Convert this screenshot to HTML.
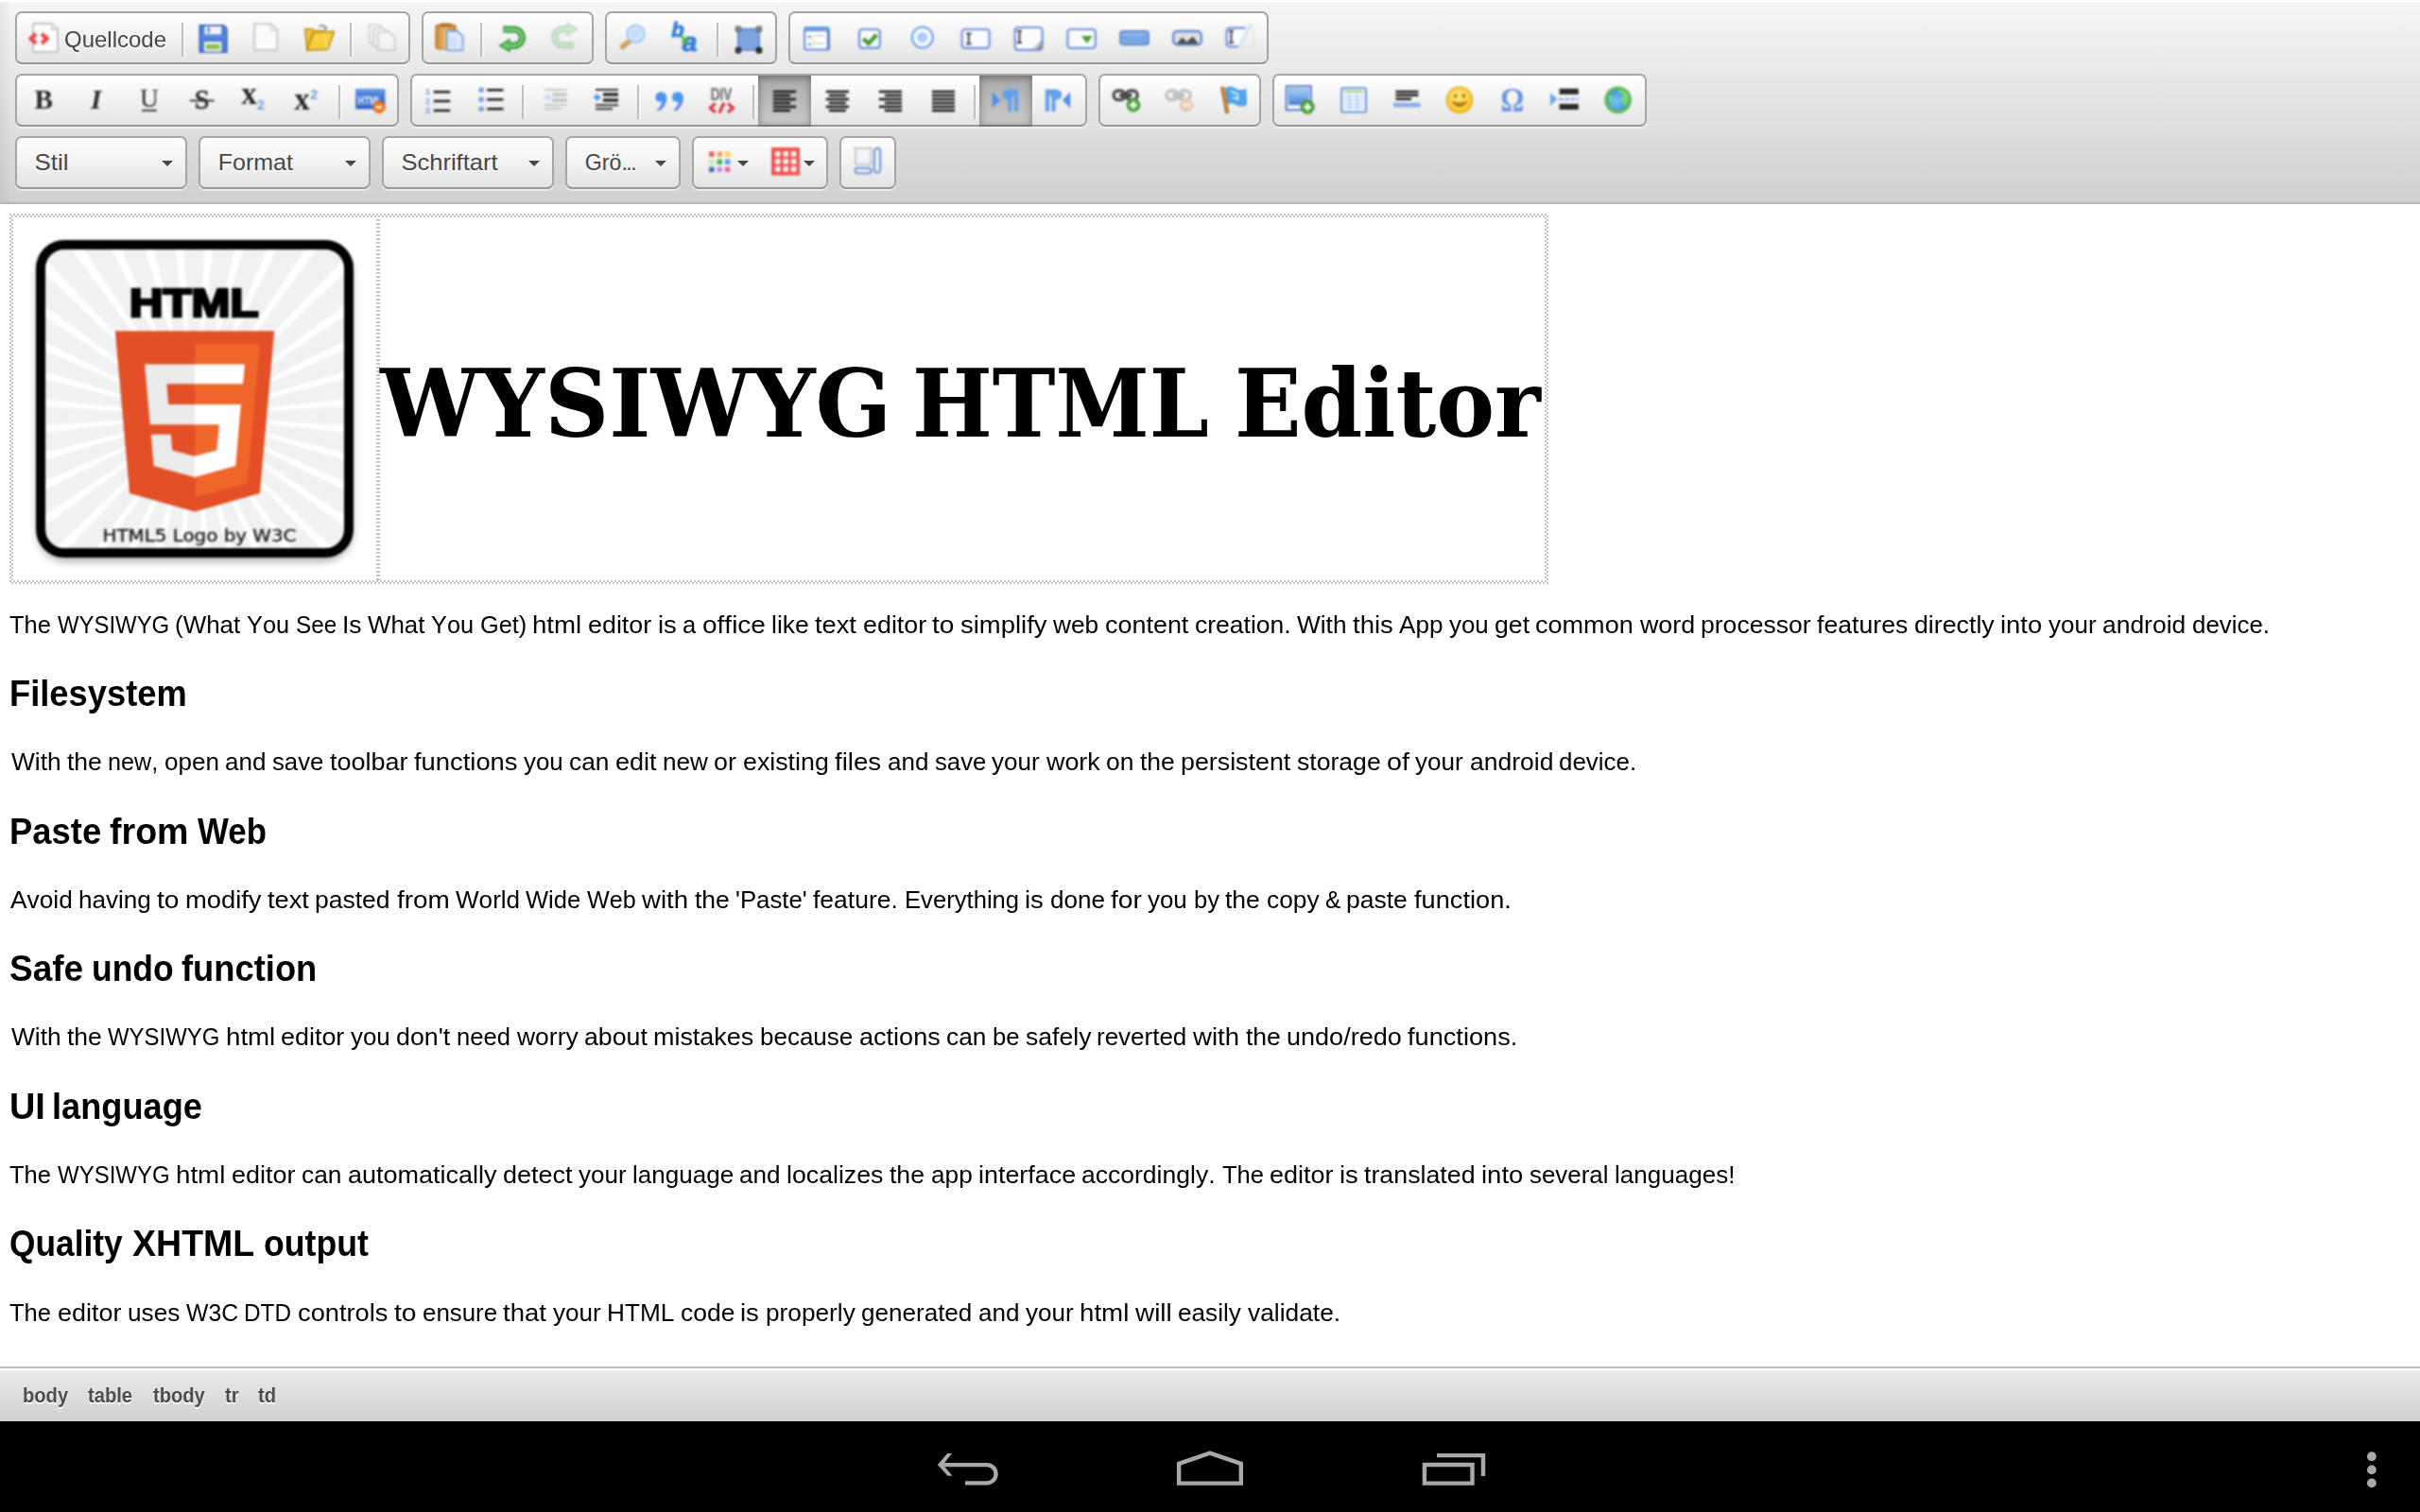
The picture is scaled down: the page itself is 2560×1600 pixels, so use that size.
<!DOCTYPE html><html><head><meta charset="utf-8"><title>WYSIWYG HTML Editor</title><style>*{box-sizing:content-box}
html,body{margin:0;padding:0}
body{width:2560px;height:1600px;overflow:hidden;background:#fff;position:relative;font-family:"Liberation Sans",sans-serif;color:#000}
#top{position:absolute;left:0;top:0;width:2528px;height:198px;padding:12px 16px 4px;border-bottom:2px solid #b6b6b6;background:linear-gradient(90deg,rgba(0,0,0,.05),rgba(0,0,0,0) 12px),linear-gradient(#f5f5f5,#cfd1cf);box-shadow:0 2px 0 #fff inset}
.grp{float:left;height:52px;border:2px solid #a6a6a6;border-bottom-color:#979797;border-radius:7px;margin:0 12px 10px 0;background:linear-gradient(#fff,#e4e4e4);box-shadow:0 2px 0 rgba(255,255,255,.5),0 0 4px rgba(255,255,255,.15) inset,0 2px 0 rgba(255,255,255,.15) inset}
.brk{clear:left;display:block;height:0}
.btn{float:left;height:36px;padding:8px 12px;position:relative}
.btn svg{filter:blur(.8px);display:block;width:32px;height:32px;margin-top:2px;float:left;overflow:visible}
.btn.off svg{opacity:.3}
.btn.on{background:linear-gradient(#aaa,#cacaca);box-shadow:0 2px 8px rgba(0,0,0,.4) inset,0 2px 0 rgba(0,0,0,.2)}
.lbl{position:relative;top:1.5px;transform:scaleX(.9995);transform-origin:0 50%;float:left;font-size:24px;line-height:36px;padding-left:6px;color:#474747;text-shadow:0 2px 0 rgba(255,255,255,.5);width:108px;white-space:nowrap}
.sep{float:left;width:2px;height:36px;margin:10px 4px 0;background:#c0c0c0;box-shadow:2px 0 2px rgba(255,255,255,.5)}
.arr{float:left;width:0;height:0;margin:16px 0 0 2px;border-left:6px solid transparent;border-right:6px solid transparent;border-top:6px solid #474747}
.combo{float:left;height:52px;border:2px solid #a6a6a6;border-bottom-color:#979797;border-radius:7px;margin:0 12px 10px 0;background:linear-gradient(#fff,#e4e4e4);box-shadow:0 2px 0 rgba(255,255,255,.5),0 0 4px rgba(255,255,255,.15) inset,0 2px 0 rgba(255,255,255,.15) inset}
.ctext{float:left;width:120px;padding-left:20px;font-size:24px;line-height:52px;color:#474747;text-shadow:0 2px 0 rgba(255,255,255,.5);white-space:nowrap;overflow:hidden}
.copen{float:left;width:10px;height:44px;margin:2px 14px 2px;position:relative}
.copen i{position:absolute;left:-1px;top:22px;width:0;height:0;border-left:6px solid transparent;border-right:6px solid transparent;border-top:6px solid #474747}
#content{position:absolute;left:0;top:216px;width:2560px;height:1230px;background:#fff;overflow:hidden}
.p{position:absolute;left:0;font-size:26px;line-height:30px;white-space:nowrap;margin:0;font-kerning:none;width:2560px;height:30px}
.p span{position:absolute;top:0;transform-origin:0 0}
.h{position:absolute;left:0;font-size:39px;line-height:46px;font-weight:bold;white-space:nowrap;margin:0;width:2560px;height:46px}
.h span{position:absolute;top:0;transform-origin:0 0}
#tbl{position:absolute;left:10px;top:10px;width:1628px;height:392px}
.dot{position:absolute;background:repeating-conic-gradient(#fff 0 25%,#c4c4c4 0 50%) 0 0/4px 4px}
.dsh{position:absolute;background:repeating-linear-gradient(#c4c4c4 0 2px,#fff 2px 4px)}
#title{position:absolute;left:0;top:151px;margin:0;font-family:"DejaVu Serif Condensed","DejaVu Serif","Liberation Serif",serif;font-weight:bold;font-stretch:condensed;font-size:99px;line-height:120px;white-space:nowrap}
#title span{position:absolute;top:0;transform-origin:0 0}
#bottom{position:absolute;left:0;top:1446px;width:2560px;height:56px;border-top:2px solid #bfbfbf;background:linear-gradient(#ebebeb,#cfd1cf);box-shadow:0 2px 0 #fff inset}
.path{position:absolute;top:15px;transform-origin:0 50%;transform:scaleX(.915);font-size:22px;line-height:28px;font-weight:bold;color:#4c4c4c;text-shadow:0 2px 0 #fff;white-space:nowrap}
#nav{position:absolute;left:0;top:1504px;width:2560px;height:96px;background:#000}
#nav svg{position:absolute;left:0;top:0}
</style></head><body><div id="top"><span class="grp"><span class="btn"><svg viewBox="0 0 16 16"><path d="M2.5 .5h10l3 3v12h-13z" fill="#fcfcfc" stroke="#c4c4c4"/><path d="M12.5 .5v3h3" fill="#eee" stroke="#c4c4c4" stroke-width=".8"/>
<path d="M4.100 6L1.300 8.400l2.800 2.500M7 6l2.900 2.400L7 10.900" fill="none" stroke="#e8484c" stroke-width="2.200" stroke-linejoin="round"/></svg><span class="lbl">Quellcode</span></span><span class="sep"></span><span class="btn "><svg viewBox="0 0 16 16"><path d="M.7 1.4h12.6l1.6 1.6v12.5H.7z" fill="#4f80d4" stroke="#3d68bd" stroke-width=".9"/>
<rect x="3.2" y="1.9" width="8.9" height="4.3" fill="#eef3fb"/><rect x="4.9" y="2.4" width=".9" height="3" fill="#3d68bd"/>
<rect x="3" y="10.1" width="9.2" height="5.2" fill="#f2f7ee"/><rect x="3.9" y="11.4" width="7.3" height="2.7" fill="#8cc152"/>
<rect x="1" y="7" width="13.6" height=".7" fill="#6f9be0" opacity=".7"/></svg></span><span class="btn "><svg viewBox="0 0 16 16"><path d="M1.6 .6h8.8l3.2 3.3v10.6H1.6z" fill="#fbfbfb" stroke="#c9c9c9"/><path d="M10.2 .8v3.3h3.2" fill="#efefef" stroke="#d6d6d6" stroke-width=".7"/></svg></span><span class="btn "><svg viewBox="0 0 16 16"><path d="M11.2 3.2c-.3-2-2.6-2.4-3.3-.7" fill="none" stroke="#8a8a8a" stroke-width=".8"/><path d="M10.4 2.6l.9 1.5.9-1.5z" fill="#666"/>
<path d="M.4 3.3h4l.8 1h5.6v1.2H4.4L1.4 14.4z" fill="#f3c436" stroke="#b68a12" stroke-width=".7"/>
<path d="M4.9 5.2l10.9-.6-3.4 9.5-11 .5z" fill="#f7cd3b" stroke="#b68a12" stroke-width=".7"/>
<path d="M10.2 5.2l2 8.6" stroke="#fbe27c" stroke-width="1" opacity=".8"/></svg></span><span class="sep"></span><span class="btn off"><svg viewBox="0 0 16 16"><path d="M1.3 1.3h5.5l2.3 2.3v7.2H1.3z" fill="#fff" stroke="#888" /><path d="M3.6 3h5.5l2.3 2.3v7.2H3.6z" fill="#fff" stroke="#888"/><path d="M5.9 4.9h5.8l3.2 3.2v6.4h-9z" fill="#fff" stroke="#888"/></svg></span></span><span class="grp"><span class="btn "><svg viewBox="0 0 16 16"><defs><linearGradient id="gp" x1="0" x2="1"><stop offset="0" stop-color="#c98738"/><stop offset=".45" stop-color="#eab568"/><stop offset="1" stop-color="#c98738"/></linearGradient></defs>
<rect x=".5" y="1.2" width="10.6" height="12.8" rx="1.2" fill="url(#gp)" stroke="#b5752a" stroke-width=".6"/><rect x="2.6" y=".3" width="6.4" height="2" rx=".8" fill="#b27328"/>
<path d="M6.4 4.5h5.6l2.8 2.8v7.4H6.4z" fill="#dbe9fc" stroke="#7ea3de" stroke-width=".9"/><path d="M8.6 7v6M10.6 7.5v5.5" stroke="#bcd3f5" stroke-width=".8"/></svg></span><span class="sep"></span><span class="btn "><svg viewBox="0 0 16 16"><path d="M3.1 3.600H8.900a4.300 4.300 0 0 1 0 8.600H6" fill="none" stroke="#3a9641" stroke-width="3.600"/><path d="M6.900 8.300v7.600L.6 12.100z" fill="#3f9c45"/>
<path d="M3.600 3.600H8.900a4.300 4.300 0 0 1 0 8.600H6" fill="none" stroke="#74cc70" stroke-width="1.700"/><path d="M6.100 9.900v4.400L2.200 12.100z" fill="#74cc70"/></svg></span><span class="btn off"><svg viewBox="0 0 16 16"><g transform="translate(15.600,15.500) scale(-1,-1)"><path d="M3.1 3.600H8.900a4.300 4.300 0 0 1 0 8.600H6" fill="none" stroke="#3a9641" stroke-width="3.600"/><path d="M6.900 8.300v7.600L.6 12.100z" fill="#3f9c45"/>
<path d="M3.600 3.600H8.900a4.300 4.300 0 0 1 0 8.600H6" fill="none" stroke="#74cc70" stroke-width="1.700"/><path d="M6.100 9.900v4.400L2.200 12.100z" fill="#74cc70"/></g></svg></span></span><span class="grp"><span class="btn "><svg viewBox="0 0 16 16"><path d="M5.800 9.900L2.300 12.700" stroke="#c08a45" stroke-width="2.500" stroke-linecap="round"/><path d="M5.600 10L2.500 12.500" stroke="#e6b571" stroke-width="1.100" stroke-linecap="round"/>
<circle cx="9.2" cy="5.9" r="4.6" fill="#cfe4fb" stroke="#a9c8ee" stroke-width="1"/><circle cx="9" cy="5.6" r="2.4" fill="#c3dcf8"/></svg></span><span class="btn "><svg viewBox="0 0 16 16"><text x=".1" y="7.500" font-family="Liberation Sans,sans-serif" font-weight="bold" font-style="italic" font-size="11" fill="#3b7fd9" stroke="#3b7fd9" stroke-width=".5">b</text>
<text x="5.900" y="15.200" font-family="Liberation Sans,sans-serif" font-weight="bold" font-style="italic" font-size="14" fill="#3b7fd9" stroke="#3b7fd9" stroke-width=".6">a</text>
<path d="M4.8 6.6l3.2 3.2M8.4 7.4v2.8H5.6" fill="none" stroke="#44b04a" stroke-width="1.3"/></svg></span><span class="sep"></span><span class="btn "><svg viewBox="0 0 16 16"><rect x="2.4" y="3.3" width="11.2" height="11.2" fill="#7fa7e2" stroke="#5a86cf" stroke-width=".8"/>
<path d="M4 4v10M6 4v10M8 4v10M10 4v10M12 4v10" stroke="#739cdc" stroke-width=".5"/>
<rect x="1.2" y="2.1" width="2.6" height="2.6" rx=".5" fill="#8a8a8a" stroke="#666" stroke-width=".6"/><rect x="12.2" y="2.1" width="2.6" height="2.6" rx=".5" fill="#8a8a8a" stroke="#666" stroke-width=".6"/>
<rect x="1.2" y="13.3" width="2.6" height="2.6" rx=".5" fill="#444" stroke="#222" stroke-width=".6"/><rect x="12.2" y="13.3" width="2.6" height="2.6" rx=".5" fill="#333" stroke="#111" stroke-width=".6"/></svg></span></span><span class="grp"><span class="btn "><svg viewBox="0 0 16 16"><rect x="1.6" y="2.6" width="12.8" height="11.7" rx=".8" fill="#fdfeff" stroke="#5f8ed6" stroke-width="1"/><rect x="1.6" y="2.4" width="12.8" height="2.2" fill="#6a9be0"/><rect x="13.4" y="4.4" width="1.3" height="10" fill="#5580c0"/>
<rect x="3.4" y="7" width="1.4" height="1.1" fill="#4a78d0"/><rect x="3.4" y="11" width="1.4" height="1.1" fill="#4a78d0"/><path d="M6 6.5v6.5" stroke="#e8c9a0" stroke-width=".5"/>
<path d="M6.8 6.9h5.4M6.8 10.9h5.4" stroke="#c9c9d4" stroke-width=".8"/></svg></span><span class="btn "><svg viewBox="0 0 16 16"><rect x="2.5" y="3.5" width="10.9" height="9.9" rx="1.6" fill="#f6f9fe" stroke="#6f92dc" stroke-width="1.1"/><path d="M4.6 8.6l2.8 2.4 4.3-4.6" fill="none" stroke="#4c9c2c" stroke-width="2.2"/></svg></span><span class="btn "><svg viewBox="0 0 16 16"><circle cx="7.9" cy="7.8" r="5.5" fill="#f4f8fe" stroke="#7ca4e3" stroke-width="1.1"/><circle cx="7.9" cy="7.8" r="2.7" fill="#a9cdf6"/></svg></span><span class="btn "><svg viewBox="0 0 16 16"><rect x=".8" y="3.5" width="14.5" height="9.9" rx="1.6" fill="#f9fbff" stroke="#6f92dc" stroke-width="1.1"/><path d="M4.4 5.8v5.4M3 5.8h2.8M3 11.2h2.8" stroke="#555" stroke-width="1.1"/></svg></span><span class="btn "><svg viewBox="0 0 16 16"><rect x=".8" y="2.5" width="14.5" height="11.9" rx="1.6" fill="#f9fbff" stroke="#6f92dc" stroke-width="1.1"/><path d="M3.2 4.4v6.2M1.9 4.4h2.6M1.9 10.6h2.6" stroke="#555" stroke-width="1.1"/>
<path d="M15 9.2v5h-5z" fill="#909090"/><path d="M14.6 10.8l-3.4 3.4" stroke="#d8d8d8" stroke-width=".7"/></svg></span><span class="btn "><svg viewBox="0 0 16 16"><rect x=".7" y="3.5" width="14.7" height="9.9" rx="1.6" fill="#f9fbff" stroke="#6f92dc" stroke-width="1.1"/><path d="M7.9 7h6l-3 3.9z" fill="#4c9c2c"/></svg></span><span class="btn "><svg viewBox="0 0 16 16"><rect x=".5" y="4.5" width="15" height="7.2" rx="1.6" fill="#7ba8e2" stroke="#5e8dd2" stroke-width=".9"/><rect x="1.6" y="5.4" width="12.8" height="1.6" rx=".8" fill="#8bb5ea"/></svg></span><span class="btn "><svg viewBox="0 0 16 16"><rect x=".6" y="4.5" width="14.8" height="7.2" rx="2.2" fill="#dedede" stroke="#5e8dd2" stroke-width="1.2"/><path d="M2.3 11.2l3-3.4 2.4 2.4 3.2-3 3 4z" fill="#4a4a4a"/></svg></span><span class="btn "><svg viewBox="0 0 16 16"><path d="M10.7 2.8H2.4a1.6 1.6 0 0 0-1.6 1.6v6.7a1.6 1.6 0 0 0 1.6 1.6h4.8" fill="#f9fbff" stroke="#6f92dc" stroke-width="1.1"/><path d="M3.2 4.4v6.2M1.9 4.4h2.6M1.9 10.6h2.6" stroke="#555" stroke-width="1.1"/>
<path d="M13.9 .4L6.9 13.8" stroke="#cfe0f8" stroke-width="1.2"/><path d="M11.5 2.8h3.6v10H8" fill="none" stroke="#d5d5d5" stroke-width=".7" stroke-dasharray=".8 .8"/></svg></span></span><span class="brk"></span><span class="grp"><span class="btn "><svg viewBox="0 0 16 16"><text x="8.1" y="12.7" text-anchor="middle" font-family="Liberation Serif,serif" font-weight="bold" font-size="14.6" fill="#2b2b2b">B</text></svg></span><span class="btn "><svg viewBox="0 0 16 16"><text x="7.9" y="12.7" text-anchor="middle" font-family="Liberation Serif,serif" font-weight="bold" font-style="italic" font-size="14.6" fill="#2b2b2b">I</text></svg></span><span class="btn "><svg viewBox="0 0 16 16"><text x="8" y="11.5" text-anchor="middle" font-family="Liberation Serif,serif" font-size="13.8" fill="#2b2b2b">U</text><rect x="4.1" y="13" width="7.8" height=".9" fill="#2a2a2a"/></svg></span><span class="btn "><svg viewBox="0 0 16 16"><text x="7.9" y="12.7" text-anchor="middle" font-family="Liberation Serif,serif" font-size="14.400" fill="#2b2b2b" stroke="#2b2b2b" stroke-width=".35">S</text><rect x="1.4" y="7.8" width="12.9" height=".9" fill="#2a2a2a"/></svg></span><span class="btn "><svg viewBox="0 0 16 16"><text x=".6" y="9.8" font-family="Liberation Serif,serif" font-weight="bold" font-size="16.5" fill="#2b2b2b">x</text><text x="9" y="13" font-family="Liberation Sans,sans-serif" font-weight="bold" font-size="7.2" fill="#6fa2e4">2</text></svg></span><span class="btn "><svg viewBox="0 0 16 16"><text x=".6" y="13.1" font-family="Liberation Serif,serif" font-weight="bold" font-size="16.5" fill="#2b2b2b">x</text><text x="9.1" y="7.3" font-family="Liberation Sans,sans-serif" font-weight="bold" font-size="7.2" fill="#6fa2e4">2</text></svg></span><span class="sep"></span><span class="btn "><svg viewBox="0 0 16 16"><defs><linearGradient id="grf" x1="0" x2="0" y1="0" y2="1"><stop offset="0" stop-color="#5b8fe0"/><stop offset="1" stop-color="#2f62c4"/></linearGradient></defs>
<rect x=".1" y="2" width="15.6" height="10.7" fill="url(#grf)"/><path d="M1 3h13.8" stroke="#a8c4f0" stroke-width=".5" stroke-dasharray=".6 .5"/>
<text x="7.6" y="10.4" text-anchor="middle" font-family="Liberation Sans,sans-serif" font-weight="bold" font-size="6.6" fill="#eaf2ff" textLength="12.6" lengthAdjust="spacingAndGlyphs">HTML</text>
<circle cx="12.500" cy="11.700" r="3.100" fill="#ee7c22" stroke="#d2600e" stroke-width=".5"/><rect x="10.800" y="11.100" width="3.400" height="1.200" rx=".4" fill="#fff"/></svg></span></span><span class="grp"><span class="btn "><svg viewBox="0 0 16 16"><g font-family="Liberation Sans,sans-serif" font-weight="bold" font-size="4.9" fill="#6fa2e4"><text x=".9" y="5.2">1</text><text x=".9" y="10.2">2</text><text x=".9" y="15.2">3</text></g>
<path d="M5.4 3.6h8.7M5.4 8.5h8.7M5.4 13.5h8.7" stroke="#1c1c1c" stroke-width="1.250"/></svg></span><span class="btn "><svg viewBox="0 0 16 16"><rect x="1.2" y="1.4" width="2.7" height="2.5" rx=".5" fill="#74a1e3"/><rect x="1.2" y="6.4" width="2.7" height="2.5" rx=".5" fill="#74a1e3"/><rect x="1.2" y="11.4" width="2.7" height="2.5" rx=".5" fill="#74a1e3"/>
<path d="M5.6 2.6h8.6M5.6 7.6h8.6M5.6 12.6h8.6" stroke="#1c1c1c" stroke-width="1.250"/></svg></span><span class="sep"></span><span class="btn off"><svg viewBox="0 0 16 16"><path d="M3.1 2.5h11.8M3.1 10.6h11.8M3.1 12.6h9" stroke="#555" stroke-width=".9"/><path d="M7.1 5h7.8M7.1 8h7.8" stroke="#555" stroke-width="1.7"/><path d="M5.6 4.6v4L2.4 6.6z" fill="#5b96e6"/><path d="M5 6.6h1.6" stroke="#5b96e6" stroke-width="1"/></svg></span><span class="btn "><svg viewBox="0 0 16 16"><path d="M2 2.5h12M2 10.6h12M2 12.6h9" stroke="#333" stroke-width="1"/><path d="M6 5h8M6 8h8" stroke="#2a2a2a" stroke-width="1.8"/><path d="M2.2 4.3v4.4L5 6.5z" fill="#5b96e6"/><path d="M.9 6.5h2" stroke="#5b96e6" stroke-width="1.2"/></svg></span><span class="sep"></span><span class="btn "><svg viewBox="0 0 16 16"><defs><linearGradient id="gbq" x1="0" x2="0" y1="0" y2="1"><stop offset="0" stop-color="#4b9bf0"/><stop offset=".6" stop-color="#4b90ea"/><stop offset="1" stop-color="#6d76d2"/></linearGradient></defs>
<path d="M3.7 3.6c1.7 0 2.9 1.2 2.9 3.1 0 3-1.6 5.6-4.3 7.2l-.7-.9c1.5-1.3 2.3-2.6 2.5-4.3-.3.1-.6.2-1 .2-1.4 0-2.4-1.100-2.400-2.500 0-1.600 1.300-2.800 3-2.800z" fill="url(#gbq)"/>
<path transform="translate(8.800,0)" d="M3.7 3.6c1.7 0 2.9 1.2 2.9 3.1 0 3-1.6 5.6-4.3 7.2l-.7-.9c1.5-1.3 2.3-2.6 2.5-4.300-.3.1-.6.2-1 .2-1.400 0-2.400-1.100-2.400-2.500 0-1.600 1.300-2.800 3-2.800z" fill="url(#gbq)"/></svg></span><span class="btn "><svg viewBox="0 0 16 16"><text x="7.5" y="7.8" text-anchor="middle" font-family="Liberation Sans,sans-serif" font-weight="bold" font-size="9.2" fill="#666" textLength="11.3" lengthAdjust="spacingAndGlyphs">DIV</text>
<path d="M4.400 9.700L1.700 12.100l2.700 2.400M11 9.700l2.700 2.400-2.700 2.400M9 9.400L6.400 14.800" fill="none" stroke="#e0343a" stroke-width="1.600"/></svg></span><span class="sep"></span><span class="btn on"><svg viewBox="0 0 16 16"><path d="M1.9 3.5H14M1.9 5.5H11M1.9 7.5H14M1.9 9.5H11M1.9 11.5H14M1.9 13.5H11" stroke="#161616" stroke-width="1.250"/></svg></span><span class="btn "><svg viewBox="0 0 16 16"><path d="M1.9 3.5H14M3.5 5.5H12.4M1.9 7.5H14M3.5 9.5H12.4M1.9 11.5H14M3.5 13.5H12.4" stroke="#161616" stroke-width="1.250"/></svg></span><span class="btn "><svg viewBox="0 0 16 16"><path d="M1.9 3.5H14M5 5.5H14M1.9 7.5H14M5 9.5H14M1.9 11.5H14M5 13.5H14" stroke="#161616" stroke-width="1.250"/></svg></span><span class="btn "><svg viewBox="0 0 16 16"><path d="M2 3.5H14M2 5.5H14M2 7.5H14M2 9.5H14M2 11.5H14M2 13.5H14" stroke="#161616" stroke-width="1.250"/></svg></span><span class="sep"></span><span class="btn on"><svg viewBox="0 0 16 16"><path d="M.8 3.600v8.700l4.200-4.350z" fill="#4f90e8"/><path d="M10.150 2.400v11.600M13.450 2.400v11.600" stroke="#62a0ec" stroke-width="2"/><path d="M14.400 2.400H9.400c-1.900 0-3.200 1.200-3.200 2.700s1.300 2.700 3.200 2.700h.8" fill="#62a0ec"/></svg></span><span class="btn "><svg viewBox="0 0 16 16"><path d="M14.100 3.600v8.700l-4.100-4.350z" fill="#4f90e8"/><path d="M1.950 2.400v11.600M5.250 2.400v11.600" stroke="#62a0ec" stroke-width="2.100"/><path d="M.9 2.400h5.400c2 0 3.300 1.200 3.300 2.700s-1.300 2.700-3.300 2.700H5.200" fill="#62a0ec"/></svg></span></span><span class="grp"><span class="btn "><svg viewBox="0 0 16 16"><g fill="none" stroke="#4c4c4c" stroke-width="1.700"><rect x="1" y="3" width="6" height="4.800" rx="2.400"/><rect x="7.600" y="3" width="6" height="4.800" rx="2.400"/></g><rect x="4.200" y="4.500" width="6.400" height="1.900" rx=".6" fill="#262626"/><path d="M5.400 5.400h4" stroke="#9a9a9a" stroke-width=".5"/><circle cx="11.500" cy="10.600" r="3.400" fill="#4aa43a" stroke="#3a8a2c" stroke-width=".5"/><path d="M11.500 8.600v4M9.500 10.600h4" stroke="#fff" stroke-width="1.300"/></svg></span><span class="btn off"><svg viewBox="0 0 16 16"><g fill="none" stroke="#4c4c4c" stroke-width="1.700"><rect x="1" y="3" width="6" height="4.800" rx="2.400"/><rect x="7.600" y="3" width="6" height="4.800" rx="2.400"/></g><rect x="4.200" y="4.500" width="6.400" height="1.900" rx=".6" fill="#262626"/><path d="M5.400 5.400h4" stroke="#9a9a9a" stroke-width=".5"/><circle cx="11.500" cy="10.600" r="3.400" fill="#ee7c22" stroke="#d2600e" stroke-width=".5"/><path d="M9.500 10.600h4" stroke="#fff" stroke-width="1.300"/></svg></span><span class="btn "><svg viewBox="0 0 16 16"><path d="M2.800 1.800L5 14" stroke="#a8691e" stroke-width="2.200" stroke-linecap="round"/><path d="M3 1.800L5 13.600" stroke="#d9953c" stroke-width="1" stroke-linecap="round"/>
<path d="M4.400 1.800c2.200-1.400 3.600-.6 5.200.3 1.600.9 3.200 1.200 5.300.2l.3 8.100c-2 .9-3.700.8-5.300-.1s-2.700-1.300-4.300-.4z" fill="#4ea6ea" stroke="#3d8fd8" stroke-width=".5"/>
<path d="M7 3.200c1.200.2 2 1 3 1.400M7.600 6.400c1 .2 2 .9 3.200 1.200M10.600 4.200l.3 4" stroke="#d6ecfb" stroke-width=".9" fill="none"/></svg></span></span><span class="grp"><span class="btn "><svg viewBox="0 0 16 16"><defs><linearGradient id="gim" x1="0" x2="0" y1="0" y2="1"><stop offset="0" stop-color="#a6d2f4"/><stop offset="1" stop-color="#4a80d4"/></linearGradient></defs>
<rect x=".4" y=".6" width="13" height="12.600" fill="#f4f6fb" stroke="#4a6fc2" stroke-width=".9"/><rect x="1.800" y="2" width="10.200" height="8.400" fill="url(#gim)" stroke="#5f8cd8" stroke-width=".5"/>
<circle cx="11.600" cy="11.600" r="3.500" fill="#4aa43a" stroke="#3a8a2c" stroke-width=".5"/><path d="M11.600 9.600v4M9.600 11.600h4" stroke="#fff" stroke-width="1.300"/></svg></span><span class="btn "><svg viewBox="0 0 16 16"><rect x="1.600" y="1.600" width="12.900" height="12.600" rx=".6" fill="#f7faff" stroke="#6b94da" stroke-width="1"/><path d="M2.800 3.500h10.500" stroke="#8cc152" stroke-width=".8"/>
<path d="M3 5.800h10.200M3 7.800h10.200M3 9.800h10.200M3 11.800h10.200M5.800 5v8M9.800 5v8" stroke="#a9c4ee" stroke-width=".7"/></svg></span><span class="btn "><svg viewBox="0 0 16 16"><path d="M2.200 3.500h12M2.200 5.400h12M2.200 7.400h8.300" stroke="#1a1a1a" stroke-width="1.300"/><rect x="1" y="9.400" width="14.200" height="2.300" fill="#7fa9e8"/><path d="M1.600 10.500h13" stroke="#a9c6f2" stroke-width=".6" stroke-dasharray=".8 .6"/></svg></span><span class="btn "><svg viewBox="0 0 16 16"><defs><radialGradient id="gsm" cx=".45" cy=".35" r=".7"><stop offset="0" stop-color="#fde67a"/><stop offset="1" stop-color="#f4bf20"/></radialGradient></defs>
<circle cx="8" cy="7.900" r="6.800" fill="url(#gsm)" stroke="#e2a91c" stroke-width=".7"/><ellipse cx="5.900" cy="5.800" rx=".8" ry="1" fill="#a87410"/><ellipse cx="10.100" cy="5.800" rx=".8" ry="1" fill="#a87410"/>
<path d="M4.200 8.600c1.300 3.400 6.300 3.400 7.600 0-2 1.400-5.600 1.400-7.600 0z" fill="#a87410" stroke="#a87410" stroke-width=".5"/></svg></span><span class="btn "><svg viewBox="0 0 16 16"><text x="7.900" y="13.800" text-anchor="middle" font-family="Liberation Serif,serif" font-weight="bold" font-size="17.600" fill="#6b96e0" textLength="12.600" lengthAdjust="spacingAndGlyphs">Ω</text></svg></span><span class="btn "><svg viewBox="0 0 16 16"><path d="M0 4.200v6.700l3.700-3.350z" fill="#6fa2e8"/><rect x="4.800" y="1.900" width="10.100" height="3" fill="#222"/><rect x="4.800" y="10" width="10.100" height="3" fill="#222"/>
<path d="M4.800 7.500h10.100" stroke="#6fa2e8" stroke-width="1.100" stroke-dasharray="2 1"/><path d="M5.400 3.400h9M5.400 11.500h9" stroke="#555" stroke-width=".5" stroke-dasharray=".8 .6"/></svg></span><span class="btn "><svg viewBox="0 0 16 16"><defs><radialGradient id="ggl" cx=".42" cy=".55" r=".6"><stop offset="0" stop-color="#7cc4f6"/><stop offset="1" stop-color="#2f86dc"/></radialGradient></defs>
<circle cx="7.800" cy="7.900" r="6.300" fill="url(#ggl)" stroke="#60bb5d" stroke-width="1.800"/>
<path d="M8.200 2.900c2.200-.5 4.300.800 4.900 2.800.5 1.800-.1 3.800-1.500 5.100-.9.300-.9-.9-1.300-1.700s-1.300-1-.9-2.100 1.400-.8 1.300-1.700-1.300-.5-2-1-1.200-.9-.5-1.400z" fill="#7ad874"/>
<path d="M3.200 5.600c.9-.2 1.700.3 1.800 1.200s-.7 1.200-.5 2 .9 1.300.6 2c-1.300-1-2.200-3-1.900-5.200z" fill="#7ad874"/></svg></span></span><span class="brk"></span><span class="combo"><span class="ctext" style="width:120px"><span style="display:inline-block;transform-origin:0 50%;transform:translateX(-1.6px) scaleX(1.08)">Stil</span></span><span class="copen"><i></i></span></span><span class="combo"><span class="ctext" style="width:120px"><span style="display:inline-block;transform-origin:0 50%;transform:translateX(-1.2px) scaleX(1.04)">Format</span></span><span class="copen"><i></i></span></span><span class="combo"><span class="ctext" style="width:120px"><span style="display:inline-block;transform-origin:0 50%;transform:translateX(-1.5px) scaleX(1.063)">Schriftart</span></span><span class="copen"><i></i></span></span><span class="combo"><span class="ctext" style="width:60px"><span style="display:inline-block;transform-origin:0 50%;transform:translateX(-1.2px) scaleX(0.965)">Grö<span style="letter-spacing:-1.6px">...</span></span></span><span class="copen"><i></i></span></span><span class="grp"><span class="btn"><svg viewBox="0 0 16 16"><rect x="2.05" y="2.2" width="2.700" height="2.700" fill="#e95a50"/><rect x="6.3" y="2.2" width="2.700" height="2.700" fill="#f59e57"/><rect x="10.5" y="2.2" width="2.700" height="2.700" fill="#f7cf4b"/><rect x="2.05" y="6.3" width="2.700" height="2.700" fill="#c9edb2"/><rect x="6.3" y="6.3" width="2.700" height="2.700" fill="#3cb55d"/><rect x="10.5" y="6.3" width="2.700" height="2.700" fill="#56a1ef"/><rect x="2.05" y="10.35" width="2.700" height="2.700" fill="#3e6eb6"/><rect x="6.3" y="10.35" width="2.700" height="2.700" fill="#c591e1"/><rect x="10.5" y="10.35" width="2.700" height="2.700" fill="#f061a9"/></svg><span class="arr"></span></span><span class="btn"><svg viewBox="0 0 16 16"><rect x="0" y="0" width="15" height="14.800" fill="#f1524e"/><rect x="2.05" y="2.1" width="2.700" height="2.700" fill="#fff7f7"/><rect x="6.3" y="2.1" width="2.700" height="2.700" fill="#fff7f7"/><rect x="10.5" y="2.1" width="2.700" height="2.700" fill="#fff7f7"/><rect x="2.05" y="6.1" width="2.700" height="2.700" fill="#fff7f7"/><rect x="6.3" y="6.1" width="2.700" height="2.700" fill="#fff7f7"/><rect x="10.5" y="6.1" width="2.700" height="2.700" fill="#fff7f7"/><rect x="2.05" y="10.1" width="2.700" height="2.700" fill="#fff7f7"/><rect x="6.3" y="10.1" width="2.700" height="2.700" fill="#fff7f7"/><rect x="10.5" y="10.1" width="2.700" height="2.700" fill="#fff7f7"/></svg><span class="arr"></span></span></span><span class="grp"><span class="btn "><svg viewBox="0 0 16 16"><rect x="1.500" y=".4" width="8.200" height="8.600" fill="#eef4fd" stroke="#9a8468" stroke-width=".8" stroke-dasharray=".8 .7"/>
<rect x="11.400" y=".3" width="3.200" height="13" rx="1.600" fill="#eaf1fc" stroke="#5a88d0" stroke-width=".9"/><rect x="1.300" y="10.900" width="8.600" height="2.800" rx="1.400" fill="#eaf1fc" stroke="#5a88d0" stroke-width=".9"/></svg></span></span></div><div id="content"><div class="dot" style="left:10px;top:10px;width:1628px;height:4px"></div><div class="dot" style="left:10px;top:398px;width:1628px;height:4px"></div><div class="dot" style="left:10px;top:10px;width:4px;height:392px"></div><div class="dot" style="left:1634px;top:10px;width:4px;height:392px"></div><div class="dsh" style="left:398px;top:16px;width:4px;height:382px"></div><svg id="logo" width="380" height="380" viewBox="0 0 380 380" style="filter:blur(.8px);position:absolute;left:18px;top:18px">
<defs><clipPath id="lc"><rect x="25" y="25" width="326" height="326" rx="25"/></clipPath><filter id="ls" x="-10%" y="-10%" width="120%" height="125%"><feGaussianBlur stdDeviation="5"/></filter></defs>
<rect x="22" y="26" width="332" height="334" rx="30" fill="#000" opacity=".33" filter="url(#ls)"/>
<g clip-path="url(#lc)"><rect x="20" y="20" width="336" height="336" fill="#f1f1f1"/><path d="M187.5 206L486.9 225.1L485.7 239.2zM187.5 206L479.0 276.8L475.4 290.5zM187.5 206L462.3 326.3L456.3 339.2zM187.5 206L437.2 372.2L429.1 383.8zM187.5 206L404.6 413.1L394.6 423.1zM187.5 206L365.3 447.6L353.7 455.7zM187.5 206L320.7 474.8L307.8 480.8zM187.5 206L272.0 493.9L258.3 497.5zM187.5 206L220.7 504.2L206.6 505.4zM187.5 206L168.4 505.4L154.3 504.2zM187.5 206L116.7 497.5L103.0 493.9zM187.5 206L67.2 480.8L54.3 474.8zM187.5 206L21.3 455.7L9.7 447.6zM187.5 206L-19.6 423.1L-29.6 413.1zM187.5 206L-54.1 383.8L-62.2 372.2zM187.5 206L-81.3 339.2L-87.3 326.3zM187.5 206L-100.4 290.5L-104.0 276.8zM187.5 206L-110.7 239.2L-111.9 225.1zM187.5 206L-111.9 186.9L-110.7 172.8zM187.5 206L-104.0 135.2L-100.4 121.5zM187.5 206L-87.3 85.7L-81.3 72.8zM187.5 206L-62.2 39.8L-54.1 28.2zM187.5 206L-29.6 -1.1L-19.6 -11.1zM187.5 206L9.7 -35.6L21.3 -43.7zM187.5 206L54.3 -62.8L67.2 -68.8zM187.5 206L103.0 -81.9L116.7 -85.5zM187.5 206L154.3 -92.2L168.4 -93.4zM187.5 206L206.6 -93.4L220.7 -92.2zM187.5 206L258.3 -85.5L272.0 -81.9zM187.5 206L307.8 -68.8L320.7 -62.8zM187.5 206L353.7 -43.7L365.3 -35.6zM187.5 206L394.6 -11.1L404.6 -1.1zM187.5 206L429.1 28.2L437.2 39.8zM187.5 206L456.3 72.8L462.3 85.7zM187.5 206L475.4 121.5L479.0 135.2zM187.5 206L485.7 172.8L486.9 186.9z" fill="#fff"/></g>
<rect x="25" y="25" width="326" height="326" rx="25" fill="none" stroke="#000" stroke-width="10"/>
<text x="187.3" y="101.39999999999998" text-anchor="middle" font-family="Liberation Sans,sans-serif" font-weight="bold" font-size="41.600" textLength="136.500" lengthAdjust="spacingAndGlyphs" fill="#000" stroke="#000" stroke-width="2.6" stroke-linejoin="miter">HTML</text>
<g transform="translate(92.60,116.30) scale(0.3734)">
<path fill="#E34F26" d="M71,460 L30,0 481,0 440,460 255,512"/>
<path fill="#EF652A" d="M256,472 L405,431 440,37 256,37"/>
<path fill="#EBEBEB" d="M256,208 L181,208 176,150 256,150 256,94 255,94 114,94 115,109 129,265 256,265zM256,355 L255,355 192,338 188,293 158,293 132,293 139,382 255,414 256,414z"/>
<path fill="#FFF" d="M255,208 L255,265 325,265 318,338 255,355 255,414 371,382 372,372 385,223 387,208 371,208zM255,94 L255,129 255,150 255,150 392,150 392,150 392,150 393,138 396,109 397,94z"/>
</g>
<text x="193" y="338.79999999999995" text-anchor="middle" font-family="DejaVu Sans,Liberation Sans,sans-serif" font-size="17.300" fill="#1c1c1c" stroke="#1c1c1c" stroke-width=".35" textLength="205" lengthAdjust="spacingAndGlyphs">HTML5 Logo by W3C</text>
</svg><h1 id="title"><span id="t0" style="left:402.43px;transform:scaleX(1.06272);">WYSIWYG</span> <span id="t1" style="left:965.47px;transform:scaleX(1.00658);">HTML</span> <span id="t2" style="left:1305.62px;transform:scaleX(1.03963);">Editor</span></h1><p class="p" id="p0" style="top:429.7px"><span style="left:10.30px;transform:scaleX(0.9785)">The</span> <span style="left:60.61px;transform:scaleX(0.9194)">WYSIWYG</span> <span style="left:185.27px;transform:scaleX(0.9990)">(What</span> <span style="left:261.01px;transform:scaleX(0.9733)">You</span> <span style="left:312.51px;transform:scaleX(0.9338)">See</span> <span style="left:362.18px;transform:scaleX(1.0179)">Is</span> <span style="left:389.24px;transform:scaleX(0.9943)">What</span> <span style="left:456.05px;transform:scaleX(0.9733)">You</span> <span style="left:507.54px;transform:scaleX(0.9745)">Get)</span> <span style="left:563.29px;transform:scaleX(1.0624)">html</span> <span style="left:621.94px;transform:scaleX(1.0335)">editor</span> <span style="left:695.63px;transform:scaleX(1.0556)">is</span> <span style="left:721.92px;transform:scaleX(0.9832)">a</span> <span style="left:742.61px;transform:scaleX(1.0769)">office</span> <span style="left:816.00px;transform:scaleX(1.0197)">like</span> <span style="left:862.25px;transform:scaleX(1.0470)">text</span> <span style="left:912.60px;transform:scaleX(1.0335)">editor</span> <span style="left:986.29px;transform:scaleX(1.0812)">to</span> <span style="left:1016.21px;transform:scaleX(1.0558)">simplify</span> <span style="left:1114.18px;transform:scaleX(1.0093)">web</span> <span style="left:1168.79px;transform:scaleX(1.0359)">content</span> <span style="left:1263.61px;transform:scaleX(1.0196)">creation.</span> <span style="left:1371.76px;transform:scaleX(1.0090)">With</span> <span style="left:1430.70px;transform:scaleX(1.0567)">this</span> <span style="left:1479.92px;transform:scaleX(1.0025)">App</span> <span style="left:1532.77px;transform:scaleX(0.9943)">you</span> <span style="left:1580.92px;transform:scaleX(1.0250)">get</span> <span style="left:1624.44px;transform:scaleX(1.0405)">common</span> <span style="left:1734.64px;transform:scaleX(1.0313)">word</span> <span style="left:1799.23px;transform:scaleX(1.0218)">processor</span> <span style="left:1922.35px;transform:scaleX(1.0247)">features</span> <span style="left:2025.08px;transform:scaleX(1.0284)">directly</span> <span style="left:2116.24px;transform:scaleX(1.0546)">into</span> <span style="left:2166.92px;transform:scaleX(0.9990)">your</span> <span style="left:2223.92px;transform:scaleX(1.0170)">android</span> <span style="left:2318.60px;transform:scaleX(0.9954)">device.</span></p><p class="p" id="p1" style="top:575.3px"><span style="left:11.50px;transform:scaleX(1.0111)">With</span> <span style="left:70.56px;transform:scaleX(1.0198)">the</span> <span style="left:113.90px;transform:scaleX(0.9676)">new,</span> <span style="left:173.53px;transform:scaleX(1.0021)">open</span> <span style="left:237.97px;transform:scaleX(1.0021)">and</span> <span style="left:287.93px;transform:scaleX(0.9890)">save</span> <span style="left:348.73px;transform:scaleX(1.0389)">toolbar</span> <span style="left:437.81px;transform:scaleX(1.0524)">functions</span> <span style="left:553.81px;transform:scaleX(0.9964)">you</span> <span style="left:602.06px;transform:scaleX(1.0117)">can</span> <span style="left:650.95px;transform:scaleX(1.0391)">edit</span> <span style="left:701.00px;transform:scaleX(1.0063)">new</span> <span style="left:755.48px;transform:scaleX(1.0295)">or</span> <span style="left:785.77px;transform:scaleX(1.0297)">existing</span> <span style="left:883.03px;transform:scaleX(1.0638)">files</span> <span style="left:938.70px;transform:scaleX(1.0021)">and</span> <span style="left:988.66px;transform:scaleX(0.9890)">save</span> <span style="left:1049.46px;transform:scaleX(1.0011)">your</span> <span style="left:1106.57px;transform:scaleX(1.0337)">work</span> <span style="left:1169.80px;transform:scaleX(1.0162)">on</span> <span style="left:1205.68px;transform:scaleX(1.0198)">the</span> <span style="left:1249.02px;transform:scaleX(1.0312)">persistent</span> <span style="left:1371.75px;transform:scaleX(1.0226)">storage</span> <span style="left:1466.91px;transform:scaleX(1.1083)">of</span> <span style="left:1497.43px;transform:scaleX(1.0011)">your</span> <span style="left:1554.54px;transform:scaleX(1.0192)">android</span> <span style="left:1649.43px;transform:scaleX(0.9975)">device.</span></p><p class="p" id="p2" style="top:720.8px"><span style="left:10.60px;transform:scaleX(1.0117)">Avoid</span> <span style="left:82.88px;transform:scaleX(1.0026)">having</span> <span style="left:166.17px;transform:scaleX(1.0828)">to</span> <span style="left:196.13px;transform:scaleX(1.0505)">modify</span> <span style="left:283.05px;transform:scaleX(1.0485)">text</span> <span style="left:333.47px;transform:scaleX(1.0197)">pasted</span> <span style="left:419.55px;transform:scaleX(1.0734)">from</span> <span style="left:481.85px;transform:scaleX(1.0034)">World</span> <span style="left:556.45px;transform:scaleX(0.9826)">Wide</span> <span style="left:621.14px;transform:scaleX(0.9685)">Web</span> <span style="left:679.39px;transform:scaleX(1.0593)">with</span> <span style="left:734.85px;transform:scaleX(1.0191)">the</span> <span style="left:778.16px;transform:scaleX(0.9919)">'Paste'</span> <span style="left:860.43px;transform:scaleX(1.0185)">feature.</span> <span style="left:956.71px;transform:scaleX(0.9858)">Everything</span> <span style="left:1084.29px;transform:scaleX(1.0571)">is</span> <span style="left:1110.62px;transform:scaleX(1.0028)">done</span> <span style="left:1175.10px;transform:scaleX(1.0834)">for</span> <span style="left:1214.45px;transform:scaleX(0.9958)">you</span> <span style="left:1262.68px;transform:scaleX(0.9853)">by</span> <span style="left:1296.21px;transform:scaleX(1.0191)">the</span> <span style="left:1339.53px;transform:scaleX(1.0140)">copy</span> <span style="left:1401.70px;transform:scaleX(0.9382)">&amp;</span> <span style="left:1424.45px;transform:scaleX(1.0194)">paste</span> <span style="left:1495.76px;transform:scaleX(1.0463)">function.</span></p><p class="p" id="p3" style="top:866.4px"><span style="left:11.50px;transform:scaleX(1.0104)">With</span> <span style="left:70.52px;transform:scaleX(1.0191)">the</span> <span style="left:113.83px;transform:scaleX(0.9207)">WYSIWYG</span> <span style="left:238.67px;transform:scaleX(1.0640)">html</span> <span style="left:297.41px;transform:scaleX(1.0350)">editor</span> <span style="left:371.21px;transform:scaleX(0.9957)">you</span> <span style="left:419.43px;transform:scaleX(1.0302)">don't</span> <span style="left:483.15px;transform:scaleX(0.9844)">need</span> <span style="left:546.57px;transform:scaleX(1.0176)">worry</span> <span style="left:617.72px;transform:scaleX(1.0273)">about</span> <span style="left:691.04px;transform:scaleX(1.0354)">mistakes</span> <span style="left:803.73px;transform:scaleX(0.9999)">because</span> <span style="left:908.50px;transform:scaleX(1.0404)">actions</span> <span style="left:1000.69px;transform:scaleX(1.0110)">can</span> <span style="left:1049.55px;transform:scaleX(0.9873)">be</span> <span style="left:1084.58px;transform:scaleX(1.0220)">safely</span> <span style="left:1160.47px;transform:scaleX(0.9992)">reverted</span> <span style="left:1262.25px;transform:scaleX(1.0592)">with</span> <span style="left:1317.71px;transform:scaleX(1.0191)">the</span> <span style="left:1361.02px;transform:scaleX(1.0399)">undo/redo</span> <span style="left:1489.27px;transform:scaleX(1.0453)">functions.</span></p><p class="p" id="p4" style="top:1012.0px"><span style="left:10.30px;transform:scaleX(0.9817)">The</span> <span style="left:60.77px;transform:scaleX(0.9224)">WYSIWYG</span> <span style="left:185.84px;transform:scaleX(1.0659)">html</span> <span style="left:244.69px;transform:scaleX(1.0369)">editor</span> <span style="left:318.62px;transform:scaleX(1.0128)">can</span> <span style="left:367.57px;transform:scaleX(1.0383)">automatically</span> <span style="left:531.59px;transform:scaleX(1.0367)">detect</span> <span style="left:611.52px;transform:scaleX(1.0022)">your</span> <span style="left:668.70px;transform:scaleX(1.0014)">language</span> <span style="left:782.33px;transform:scaleX(1.0032)">and</span> <span style="left:832.34px;transform:scaleX(1.0274)">localizes</span> <span style="left:941.28px;transform:scaleX(1.0209)">the</span> <span style="left:984.67px;transform:scaleX(1.0071)">app</span> <span style="left:1034.85px;transform:scaleX(1.0344)">interface</span> <span style="left:1144.49px;transform:scaleX(1.0202)">accordingly.</span> <span style="left:1292.51px;transform:scaleX(0.9817)">The</span> <span style="left:1342.99px;transform:scaleX(1.0369)">editor</span> <span style="left:1416.92px;transform:scaleX(1.0590)">is</span> <span style="left:1443.29px;transform:scaleX(1.0296)">translated</span> <span style="left:1567.35px;transform:scaleX(1.0580)">into</span> <span style="left:1618.19px;transform:scaleX(0.9963)">several</span> <span style="left:1708.19px;transform:scaleX(1.0015)">languages!</span></p><p class="p" id="p5" style="top:1157.6px"><span style="left:10.30px;transform:scaleX(0.9817)">The</span> <span style="left:60.77px;transform:scaleX(1.0369)">editor</span> <span style="left:134.70px;transform:scaleX(1.0088)">uses</span> <span style="left:196.60px;transform:scaleX(0.9529)">W3C</span> <span style="left:258.14px;transform:scaleX(0.9364)">DTD</span> <span style="left:314.67px;transform:scaleX(1.0482)">controls</span> <span style="left:416.59px;transform:scaleX(1.0847)">to</span> <span style="left:446.60px;transform:scaleX(0.9952)">ensure</span> <span style="left:532.21px;transform:scaleX(1.0570)">that</span> <span style="left:584.54px;transform:scaleX(1.0022)">your</span> <span style="left:641.72px;transform:scaleX(1.0080)">HTML</span> <span style="left:719.56px;transform:scaleX(1.0174)">code</span> <span style="left:783.41px;transform:scaleX(1.0590)">is</span> <span style="left:809.79px;transform:scaleX(1.0090)">properly</span> <span style="left:911.05px;transform:scaleX(1.0021)">generated</span> <span style="left:1034.89px;transform:scaleX(1.0032)">and</span> <span style="left:1084.90px;transform:scaleX(1.0022)">your</span> <span style="left:1142.09px;transform:scaleX(1.0659)">html</span> <span style="left:1200.93px;transform:scaleX(1.0742)">will</span> <span style="left:1246.21px;transform:scaleX(1.0049)">easily</span> <span style="left:1319.50px;transform:scaleX(1.0130)">validate.</span></p><h2 class="h" id="h0" style="top:495.2px"><span style="left:9.61px;transform:scaleX(0.93114);">Filesystem</span></h2><h2 class="h" id="h1" style="top:640.8px"><span style="left:9.59px;transform:scaleX(0.93391);">Paste</span> <span style="left:116.24px;transform:scaleX(0.96348);">from</span> <span style="left:209.41px;transform:scaleX(0.89377);">Web</span></h2><h2 class="h" id="h2" style="top:786.3px"><span style="left:10.29px;transform:scaleX(0.94947);">Safe</span> <span style="left:97.01px;transform:scaleX(0.91028);">undo</span> <span style="left:192.32px;transform:scaleX(0.93165);">function</span></h2><h2 class="h" id="h3" style="top:931.9px"><span style="left:9.67px;transform:scaleX(0.97059);">UI</span> <span style="left:55.41px;transform:scaleX(0.92815);">language</span></h2><h2 class="h" id="h4" style="top:1077.4px"><span style="left:10.37px;transform:scaleX(0.90525);">Quality</span> <span style="left:139.92px;transform:scaleX(0.96249);">XHTML</span> <span style="left:278.7px;transform:scaleX(0.91419);">output</span></h2></div><div id="bottom"><span class="path" style="left:23.8px">body</span><span class="path" style="left:92.6px">table</span><span class="path" style="left:162.4px">tbody</span><span class="path" style="left:238.4px">tr</span><span class="path" style="left:272.5px">td</span></div><div id="nav"><svg width="2560" height="96" viewBox="0 0 2560 96" fill="none" stroke="#a9a9a9" stroke-width="4.400">
<path d="M996 46.100H1043.900a9.620 9.620 0 0 1 0 19.250H1020.900"/><path d="M991.900 46L1002.200 33.900H1007L997.600 46L1007.400 57.700H1002.600z" fill="#a9a9a9" stroke="none"/>
<path d="M1247.100 65.600V44.900L1279.900 33.600L1312.800 44.900V65.600z"/>
<path d="M1506.900 46h50.600v19.600h-50.600zM1520 36.100h49v21.800"/>
<g fill="#a9a9a9" stroke="none"><circle cx="2508.900" cy="37.250" r="4.900"/><circle cx="2508.900" cy="51.400" r="4.900"/><circle cx="2508.900" cy="65.400" r="4.900"/></g>
</svg></div></body></html>
